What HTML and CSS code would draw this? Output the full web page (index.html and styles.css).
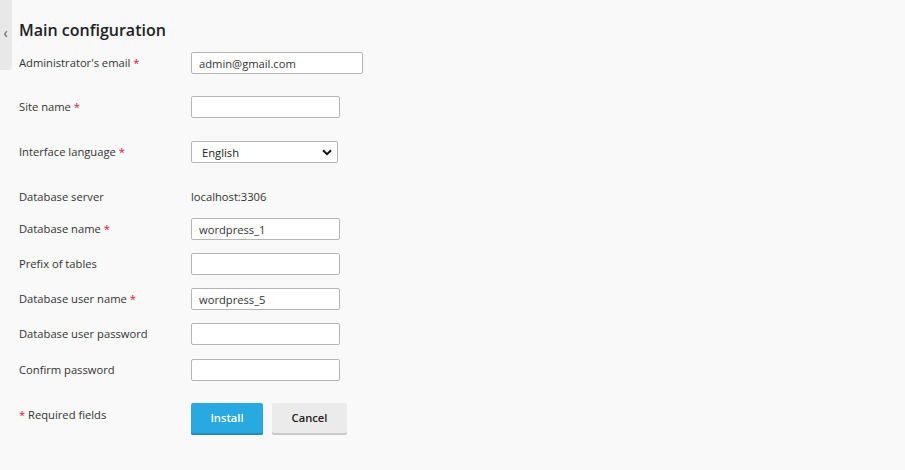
FILE: index.html
```html
<!DOCTYPE html>
<html>
<head>
<meta charset="utf-8">
<link rel="stylesheet" href="styles.css">
</head>
<body>
<div class="page">
  <div class="side-toggle"><span class="chev">&#8249;</span></div>
  <main class="content">
    <h1 class="title">Main configuration</h1>
    <form class="form">
      <div class="row gap-lg">
        <label class="label">Administrator's email <span class="req">*</span></label>
        <input class="input input-wide" type="text" value="admin@gmail.com">
      </div>
      <div class="row gap-xl">
        <label class="label">Site name <span class="req">*</span></label>
        <input class="input" type="text" value="">
      </div>
      <div class="row gap-xl">
        <label class="label">Interface language <span class="req">*</span></label>
        <div class="select"><span>English</span>
          <svg class="caret" viewBox="0 0 10 7" width="10" height="7"><path d="M1 1.2 L5 5.2 L9 1.2" fill="none" stroke="#111" stroke-width="2"/></svg>
        </div>
      </div>
      <div class="row">
        <span class="label">Database server</span>
        <span class="value">localhost:3306</span>
      </div>
      <div class="row">
        <label class="label">Database name <span class="req">*</span></label>
        <input class="input" type="text" value="wordpress_1">
      </div>
      <div class="row">
        <label class="label">Prefix of tables</label>
        <input class="input" type="text" value="">
      </div>
      <div class="row">
        <label class="label">Database user name <span class="req">*</span></label>
        <input class="input" type="text" value="wordpress_5">
      </div>
      <div class="row gap-md">
        <label class="label">Database user password</label>
        <input class="input" type="password" value="">
      </div>
      <div class="row gap-lg">
        <label class="label">Confirm password</label>
        <input class="input" type="password" value="">
      </div>
      <div class="row">
        <span class="label label-note"><span class="req">*</span> Required fields</span>
        <div class="buttons">
          <button type="button" class="btn btn-primary">Install</button>
          <button type="button" class="btn btn-default">Cancel</button>
        </div>
      </div>
    </form>
  </main>
</div>
</body>
</html>
```
FILE: styles.css
```css
* { box-sizing: border-box; }
html, body { margin: 0; padding: 0; }
body {
  background: #f9f9f9;
  font-family: "Open Sans", "Noto Sans", sans-serif;
  font-size: 11.2px;
  color: #333;
  height: 470px;
}
.page { display: flex; align-items: flex-start; }
.side-toggle {
  width: 12px;
  height: 70px;
  background: #e8e8e8;
  border-bottom-right-radius: 3px;
  display: flex;
  align-items: center;
  justify-content: center;
  flex: none;
}
.chev { color: #555; font-size: 14px; line-height: 1; margin-top: -4px; margin-left: -1px; }
.content { padding: 18px 0 0 7px; }
.title {
  margin: 0 0 10px;
  font-size: 16px;
  font-weight: 600;
  color: #222;
  line-height: 24px;
}
.form { display: flex; flex-direction: column; }
.row { display: flex; align-items: flex-start; margin-bottom: 13px; }
.row.gap-md { margin-bottom: 14px; }
.row.gap-lg { margin-bottom: 22px; }
.row.gap-xl { margin-bottom: 23px; }
.label { width: 172px; flex: none; padding-top: 3px; line-height: 16px; color: #333; }
.label-note { padding-top: 4px; }
.req { color: #d0103a; }
.value { padding-top: 3px; line-height: 16px; color: #333; }
.input {
  width: 149px;
  height: 22px;
  border: 1px solid #b5b5b5;
  border-radius: 2px;
  background: #fff;
  font-family: inherit;
  font-size: 11.2px;
  color: #333;
  padding: 0 7px;
  margin: 0;
  outline: none;
}
.input-wide { width: 172px; }
.select {
  width: 147px;
  height: 22px;
  border: 1px solid #b5b5b5;
  border-radius: 2px;
  background: #fff;
  display: flex;
  align-items: center;
  justify-content: space-between;
  padding: 0 5px 0 10px;
  color: #222;
}
.caret { display: block; }
.buttons { display: flex; gap: 9px; }
.btn {
  height: 32px;
  border: 0;
  border-radius: 2px;
  font-family: inherit;
  font-size: 11.2px;
  font-weight: 600;
  padding: 0 0 3px;
  margin: 0;
}
.btn-primary {
  width: 72px;
  background: #28a9df;
  color: #fff;
  box-shadow: inset 0 -2px 0 #1d8fc0;
}
.btn-default {
  width: 75px;
  background: #ebebeb;
  color: #222;
  box-shadow: inset 0 -2px 0 #c9c9c9;
}
```
